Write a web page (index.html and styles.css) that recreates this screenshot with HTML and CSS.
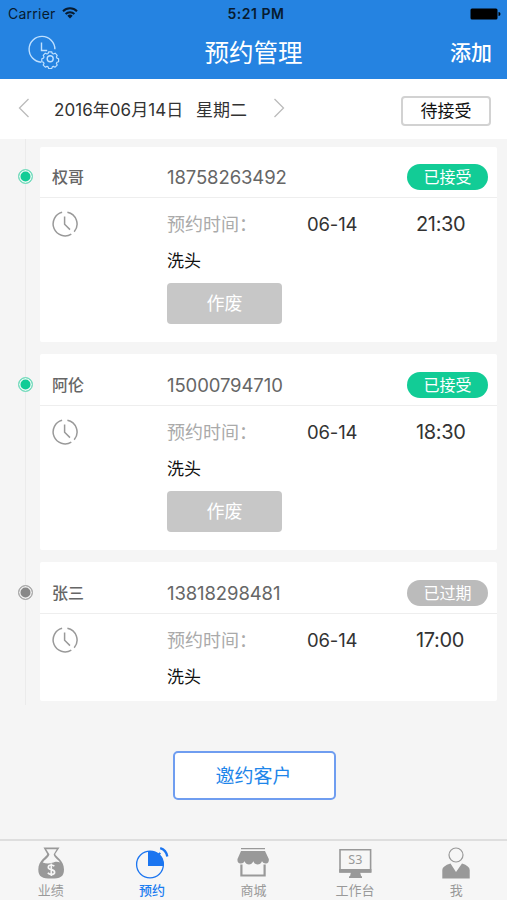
FILE: index.html
```html
<!DOCTYPE html>
<html lang="zh-CN">
<head>
<meta charset="utf-8">
<title>预约管理</title>
<link rel="stylesheet" href="styles.css">
</head>
<body>
<svg class="defs" width="0" height="0" aria-hidden="true">
  <symbol id="clock" viewBox="0 0 26 26">
    <path d="M10.100 1.300A12 12 0 1 0 19.300 23.200M22.200 20.700A12 12 0 0 0 15.400 1.200M12.600 5.500v7.800l5.400 5.300" fill="none" stroke="#999" stroke-width="1.500"/>
  </symbol>
</svg>
<div class="app">
  <header class="top">
    <div class="status">
      <span class="carrier">Carrier</span>
      <svg class="wifi" width="16" height="12" viewBox="0 0 16 12"><g fill="none" stroke="#071b30" stroke-width="2"><path d="M1 4.200a10 10 0 0 1 14 0M3.600 7a6.300 6.300 0 0 1 8.800 0"/></g><path d="M5.300 8.800a4 4 0 0 1 5.400 0L8 11.600z" fill="#071b30"/></svg>
      <span class="time">5:21 PM</span>
      <svg class="battery" width="31" height="12" viewBox="0 0 31 12"><rect x="0.500" y="0.500" width="27" height="11" rx="1.500"/><path d="M28.500 4q2 0 2 2t-2 2z"/></svg>
    </div>
    <div class="nav">
      <svg class="settings" width="32" height="34" viewBox="0 0 32 34" fill="none" stroke="#bfe0ff" stroke-width="1.400">
        <path d="M13.300 27.200A12.900 12.900 0 1 1 26.900 14.200M13.500 7.500v8h5.700"/>
        <circle cx="22.200" cy="23.800" r="3"/>
        <path d="M20.700 16.800h3l.6 1.700 1.100.5 1.700-.8 2.100 2.100-.8 1.700.5 1.100 1.700.6v3l-1.700.6-.5 1.100.8 1.700-2.100 2.100-1.700-.8-1.100.5-.6 1.700h-3l-.6-1.700-1.100-.5-1.700.8-2.100-2.100.8-1.700-.5-1.100-1.700-.6v-3l1.700-.6.5-1.100-.8-1.700 2.100-2.100 1.700.8 1.100-.5z" stroke-width="1.200" stroke-linejoin="round"/>
      </svg>
      <h1>预约管理</h1>
      <span class="add">添加</span>
    </div>
  </header>
  <section class="datebar">
    <svg class="chev" width="12" height="20" viewBox="0 0 12 20"><path d="M10.500 1 1.500 10l9 9"/></svg>
    <span class="date">2016年06月14日</span><span class="week">星期二</span>
    <svg class="chev next" width="12" height="20" viewBox="0 0 12 20"><path d="m1.500 1 9 9-9 9"/></svg>
    <button class="filter">待接受</button>
  </section>
  <main class="list">
    <article class="item">
      <i class="dot"></i>
      <div class="card">
        <div class="head"><b>权哥</b><span class="phone">18758263492</span><span class="badge">已接受</span></div>
        <div class="body">
          <svg class="clock" width="26" height="26"><use href="#clock"/></svg>
          <div class="info">
            <div class="when"><span class="label">预约时间：</span><span class="day">06-14</span><span class="hour">21:30</span></div>
            <div class="service">洗头</div>
            <button class="void">作废</button>
          </div>
        </div>
      </div>
    </article>
    <article class="item second">
      <i class="dot"></i>
      <div class="card">
        <div class="head"><b>阿伦</b><span class="phone">15000794710</span><span class="badge">已接受</span></div>
        <div class="body">
          <svg class="clock" width="26" height="26"><use href="#clock"/></svg>
          <div class="info">
            <div class="when"><span class="label">预约时间：</span><span class="day">06-14</span><span class="hour">18:30</span></div>
            <div class="service">洗头</div>
            <button class="void">作废</button>
          </div>
        </div>
      </div>
    </article>
    <article class="item expired">
      <i class="dot"></i>
      <div class="card">
        <div class="head"><b>张三</b><span class="phone">13818298481</span><span class="badge">已过期</span></div>
        <div class="body">
          <svg class="clock" width="26" height="26"><use href="#clock"/></svg>
          <div class="info">
            <div class="when"><span class="label">预约时间：</span><span class="day">06-14</span><span class="hour">17:00</span></div>
            <div class="service">洗头</div>
          </div>
        </div>
      </div>
    </article>
  </main>
  <button class="invite">邀约客户</button>
  <nav class="tabs">
    <a><svg width="34" height="34" viewBox="0 0 34 34"><path d="M9.500 1.500h16L21.200 8c.5 3 8.800 6 8.800 15.500C30 31 26 32.500 17.300 32.500S4.300 31 4.300 23.500c0-9.500 8.400-12.500 8.900-15.500z" fill="#999"/><path d="M12.200 3.200h10.500l-3 5c.4 3.600 4.300 5 6.500 8.300-3-1.500-5-.8-8 .2-3.500 1.100-6.500.8-9.500-.2 2-3.300 6.200-4.800 6.700-8.300z" fill="#f6f6f6"/><path d="M20.300 20.300q-1-1.300-3-1.300-3 0-3 2.300 0 1.900 3 2.300 3.300.5 3.300 2.600 0 2.300-3.300 2.300-2.400 0-3.400-1.700M17.300 17.500v12.500" fill="none" stroke="#f6f6f6" stroke-width="1.700"/></svg><span>业绩</span></a>
    <a class="on"><svg width="34" height="34" viewBox="0 0 34 34"><circle cx="15" cy="18.500" r="13.400" fill="none" stroke="#1b75f0" stroke-width="1.300"/><path d="M13 5v15h15.500C28.700 15 27.500 11.500 24.800 9l1.200-1.500-1.500-1.200-1.500 1.400C20 5.500 17 5 13 5z" fill="#1b75f0"/><path d="M25.200 2.200q6 1.800 7.100 8.300" fill="none" stroke="#1b75f0" stroke-width="2.300"/></svg><span>预约</span></a>
    <a><svg width="34" height="34" viewBox="0 0 34 34" fill="#999"><path d="M5 2h24v1.300H5zM5 5h24l3.800 8q.5 4-2.800 4.500-2.700.2-4-2.300-1.500 3.300-4.400 3.300-3 0-4.300-3.300-1.500 3.300-4.300 3.300-3 0-4.400-3.300-1.300 2.500-4 2.300Q1 17 1.500 13zM4.300 18.500h2.200v10h21v-10h2.200v12H4.300z"/></svg><span>商城</span></a>
    <a><svg width="34" height="34" viewBox="0 0 34 34"><path d="M2 3.800h30.600v22H2z" fill="#f6f6f6" stroke="#999" stroke-width="1.600"/><path d="M1.200 23h32.200v3.800H1.200zM13 26h9l1.200 4.300H24V32H11v-1.700h1z" fill="#999"/><text class="s3" x="17.300" y="18">S3</text></svg><span>工作台</span></a>
    <a><svg width="34" height="34" viewBox="0 0 34 34"><circle cx="17" cy="9" r="7" fill="none" stroke="#999" stroke-width="1.200"/><path d="M11.500 17.500 17 26l6-8.500q7.700 2.500 7.700 6.500v8.500H3.300V24q0-4 8.200-6.500z" fill="#999"/></svg><span>我</span></a>
  </nav>
</div>
</body>
</html>
```
FILE: styles.css
```css
* { box-sizing: border-box; }
body { margin: 0; font-family: Inter, "Noto Sans CJK SC", sans-serif; background: #f5f5f5; }
button { font-family: inherit; padding: 0; margin: 0; }
.defs { position: absolute; }
.app { width: 507px; height: 900px; display: flex; flex-direction: column; overflow: hidden; }
.top { height: 79px; background: #2583e1; flex: none; }
.status { height: 27px; display: grid; grid-template-columns: 54px 150px 108px 1fr auto; align-items: center; padding: 1px 6px 0 8px; color: #071b30; font-size: 14px; line-height: 26px; }
.carrier { letter-spacing: .25px; }
.wifi { margin: 0 0 2px; }
.time { text-align: center; font-weight: 600; font-size: 14px; margin-left: -20px; white-space: nowrap; letter-spacing: .5px; }
.battery { fill: #000; grid-column: 5; }
.nav { height: 52px; display: grid; grid-template-columns: 120px 1fr 120px; align-items: center; padding: 0 15px 0 28px; color: #fff; }
.settings { margin: 0 0 3px; }
h1 { margin: 0; font-weight: 400; font-size: 24.5px; line-height: 36px; text-align: center; padding-right: 13px; }
.add { text-align: right; font-size: 21px; font-weight: 500; line-height: 36px; }
.datebar { height: 60px; background: #fff; display: flex; align-items: center; padding: 2px 16px 4px 18px; color: #333; font-size: 17px; flex: none; }
.chev { fill: none; stroke: #bbb; stroke-width: 1.300; margin-right: 24px; }
.date { width: 142px; white-space: nowrap; letter-spacing: .05px; }
.week { width: 77px; }
.next { margin: 0; }
.filter { margin: 6px 0 0 auto; width: 90px; height: 30px; border: 2px solid #d2d2d2; border-radius: 4px; background: #fff; font-size: 17px; color: #111; line-height: 26px; }
.list { height: 566px; flex: none; display: flex; flex-direction: column; gap: 12px; padding: 8px 10px 0 0; background: linear-gradient(#ebebeb, #ebebeb) 25px 0 / 1px 100% no-repeat; }
.item { display: flex; }
.dot { flex: none; width: 15px; height: 15px; margin: 22px 7px 0 18px; border-radius: 50%; border: 1px solid #7edcc0; background: #12cc96; box-shadow: inset 0 0 0 1.500px #e9f8f3; }
.card { flex: 1; height: 195px; background: #fff; border-radius: 2px; }
.second .card { height: 196px; padding-top: 1px; }
.second .dot, .expired .dot { margin-top: 23px; }
.head { height: 51px; border-bottom: 1px solid #eee; display: grid; grid-template-columns: 115px 240px 81px; align-items: center; padding: 10px 0 0 12px; }
.head b { font-size: 16px; font-weight: 500; color: #666; line-height: 24px; }
.phone { font-size: 18.500px; color: #666; letter-spacing: -.1px; }
.badge { height: 26px; border-radius: 13px; background: #12cc96; color: #fff; font-size: 16px; line-height: 27px; text-align: center; }
.body { display: flex; padding: 13px 0 0 12px; }
.clock { margin-right: 89px; }
.when { display: flex; font-size: 18.500px; line-height: 27px; color: #333; white-space: nowrap; }
.label { width: 140px; color: #aaa; font-size: 18px; }
.day { width: 109px; letter-spacing: -.15px; }
.hour { font-size: 20px; letter-spacing: -.35px; }
.service { margin-top: 10px; height: 26px; line-height: 27px; font-size: 17px; color: #111; }
.void { display: block; margin-top: 9px; width: 115px; height: 41px; border: 0; border-radius: 4px; background: #c7c7c7; color: #fff; font-size: 18px; line-height: 41px; }
.expired .card { height: 139px; padding-top: 1px; }
.expired .dot { background: #888; border-color: #aaa; box-shadow: inset 0 0 0 1.500px #eee; }
.expired .badge { background: #bbb; }
.invite { margin: 46px 0 0 173px; width: 163px; height: 49px; flex: none; border: 2px solid #6f9df0; border-radius: 5px; background: #fff; color: #1e86ea; font-size: 19px; line-height: 45px; padding: 1px 2px 0 0; }
.tabs { margin-top: auto; height: 61px; flex: none; border-top: 2px solid #dedede; background: #f6f6f6; display: grid; grid-template-columns: repeat(5, 1fr); }
.tabs a { display: flex; flex-direction: column; align-items: center; padding-top: 5px; font-size: 13px; line-height: 20px; color: #999; }
.tabs a.on { color: #1b7df0; font-weight: 500; }
.s3 { font-family: "Noto Sans", sans-serif; font-size: 12.500px; fill: #999; text-anchor: middle; }
```
